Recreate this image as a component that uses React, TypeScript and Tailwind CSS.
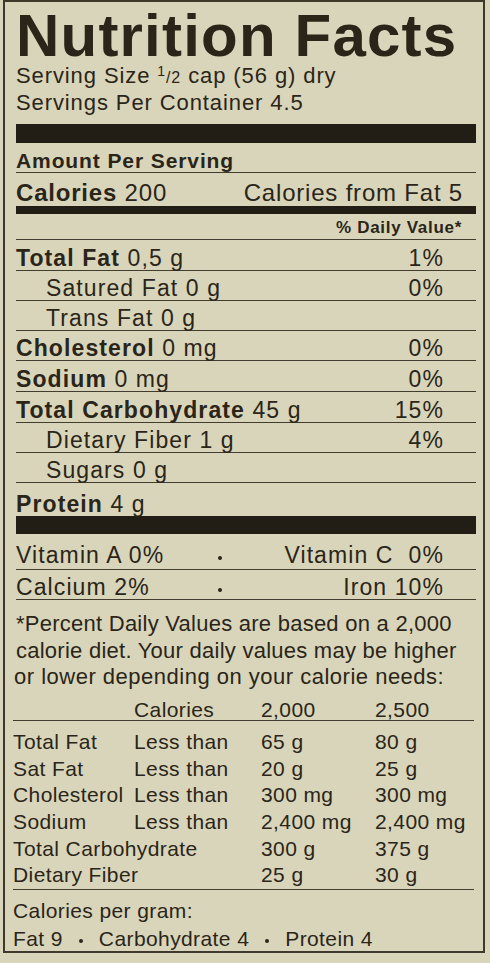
import React from "react";

type Nutrient = {
  name: string;
  amount: string;
  dv?: string;
  sub?: boolean;
  h: string; // row height, full class
};

const nutrients: Nutrient[] = [
  { name: "Total Fat", amount: "0,5 g", dv: "1%", h: "h-[31px]" },
  { name: "Satured Fat", amount: "0 g", dv: "0%", sub: true, h: "h-[30px]" },
  { name: "Trans Fat", amount: "0 g", sub: true, h: "h-[30px]" },
  { name: "Cholesterol", amount: "0 mg", dv: "0%", h: "h-[30px]" },
  { name: "Sodium", amount: "0 mg", dv: "0%", h: "h-[31px]" },
  { name: "Total Carbohydrate", amount: "45 g", dv: "15%", h: "h-[31px]" },
  { name: "Dietary Fiber", amount: "1 g", dv: "4%", sub: true, h: "h-[30px]" },
  { name: "Sugars", amount: "0 g", sub: true, h: "h-[30px]" },
];

// daily values table under the footnote
const limits = [
  ["Total Fat", "Less than", "65 g", "80 g"],
  ["Sat Fat", "Less than", "20 g", "25 g"],
  ["Cholesterol", "Less than", "300 mg", "300 mg"],
  ["Sodium", "Less than", "2,400 mg", "2,400 mg"],
  ["Total Carbohydrate", "", "300 g", "375 g"],
  ["Dietary Fiber", "", "25 g", "30 g"],
];

const Bar = ({ h }: { h: string }) => <div className={`bg-[#221e16] ${h}`} />;

const Dot = () => (
  <span className="inline-block h-[4px] w-[4px] rounded-full bg-[#2a2518] align-middle" />
);

const NutritionFacts = () => {
  return (
    <div className="min-h-[963px] w-[490px] bg-[#d9d5bb] font-['Liberation_Sans',Arial,sans-serif] text-[#2a2518]">
      <div className="ml-[3px] h-[953px] w-[482px] overflow-hidden border-2 border-[#3e392b] pl-[11px] pr-[7px]">
        <h1 className="mt-[6px] whitespace-nowrap text-[60px] font-bold leading-[56px] tracking-[1.2px]">
          Nutrition Facts
        </h1>
        <div className="-mt-[1px] whitespace-nowrap text-[22px] leading-[26.5px] tracking-[0.9px]">
          <div>
            Serving Size <span className="align-[7px] text-[14px] leading-none">1</span>
            <span className="text-[16px] leading-none">/2</span> cap (56 g) dry
          </div>
          <div>Servings Per Container 4.5</div>
        </div>

        <div className="mt-[8px]">
          <Bar h="h-[19px]" />
        </div>

        <div className="flex h-[30px] items-end border-b border-[#413c2d] pb-[1px] text-[21px] font-bold leading-none tracking-[0.9px]">
          Amount Per Serving
        </div>
        <div className="flex h-[33px] items-end justify-between pb-[1px] pr-[13px] text-[24px] leading-none tracking-[0.8px]">
          <span>
            <b>Calories</b> 200
          </span>
          <span>Calories from Fat 5</span>
        </div>
        <Bar h="h-[8px]" />
        <div className="flex h-[26px] items-end justify-end border-b border-[#413c2d] pb-[3px] pr-[14px] text-[17px] font-bold leading-none tracking-[0.7px]">
          % Daily Value*
        </div>

        <div className="text-[23px] leading-none tracking-[1.1px]">
          {nutrients.map((n) => (
            <div
              key={n.name}
              className={`flex items-end justify-between border-b border-[#413c2d] ${n.h}`}
            >
              {n.sub ? (
                <span className="pl-[30px]">
                  {n.name} {n.amount}
                </span>
              ) : (
                <span>
                  <b>{n.name}</b> {n.amount}
                </span>
              )}
              <span className="pr-[32px]">{n.dv}</span>
            </div>
          ))}
          <div className="flex h-[33px] items-end">
            <span>
              <b>Protein</b> 4 g
            </span>
          </div>
        </div>

        <Bar h="h-[18px]" />

        <div className="text-[23px] leading-none tracking-[1.1px]">
          <div className="flex h-[36px] items-end border-b border-[#413c2d] pb-[2px]">
            <span className="w-[202px]">Vitamin A 0%</span>
            <span className="mb-[7px] flex w-[10px]">
              <Dot />
            </span>
            <span className="flex-1 pr-[32px] text-right">Vitamin C&nbsp;&nbsp;0%</span>
          </div>
          <div className="flex h-[30px] items-end border-b border-[#413c2d]">
            <span className="w-[202px]">Calcium 2%</span>
            <span className="mb-[7px] flex w-[10px]">
              <Dot />
            </span>
            <span className="flex-1 pr-[32px] text-right">Iron 10%</span>
          </div>
        </div>

        <p className="whitespace-nowrap pt-[11px] text-[22px] leading-[26.67px] tracking-[0.25px]">
          *Percent Daily Values are based on a 2,000
          <br />
          calorie diet. Your daily values may be higher
          <br />
          <span className="-ml-[2px] tracking-[0.5px]">or lower depending on your calorie needs:</span>
        </p>

        <div className="-ml-[3px] mr-[2px] text-[21px] tracking-[0.4px]">
          <div className="grid h-[30px] grid-cols-[121px_127px_114px_1fr] items-end border-b border-[#413c2d] leading-none">
            <span />
            <span>Calories</span>
            <span>2,000</span>
            <span>2,500</span>
          </div>
          <div className="mt-[8px] border-b border-[#413c2d] leading-[26.67px]">
            {limits.map((r) => (
              <div key={r[0]} className="grid grid-cols-[121px_127px_114px_1fr] whitespace-nowrap">
                {r[1] ? (
                  <>
                    <span>{r[0]}</span>
                    <span>{r[1]}</span>
                  </>
                ) : (
                  <span className="col-span-2">{r[0]}</span>
                )}
                <span>{r[2]}</span>
                <span>{r[3]}</span>
              </div>
            ))}
          </div>
          <div className="pt-[7px] leading-[28px]">
            <div>Calories per gram:</div>
            <div className="whitespace-nowrap">
              Fat 9
              <span className="mx-[16px]">
                <Dot />
              </span>
              Carbohydrate 4
              <span className="mx-[16px]">
                <Dot />
              </span>
              Protein 4
            </div>
          </div>
        </div>
      </div>
    </div>
  );
};

export default NutritionFacts;
